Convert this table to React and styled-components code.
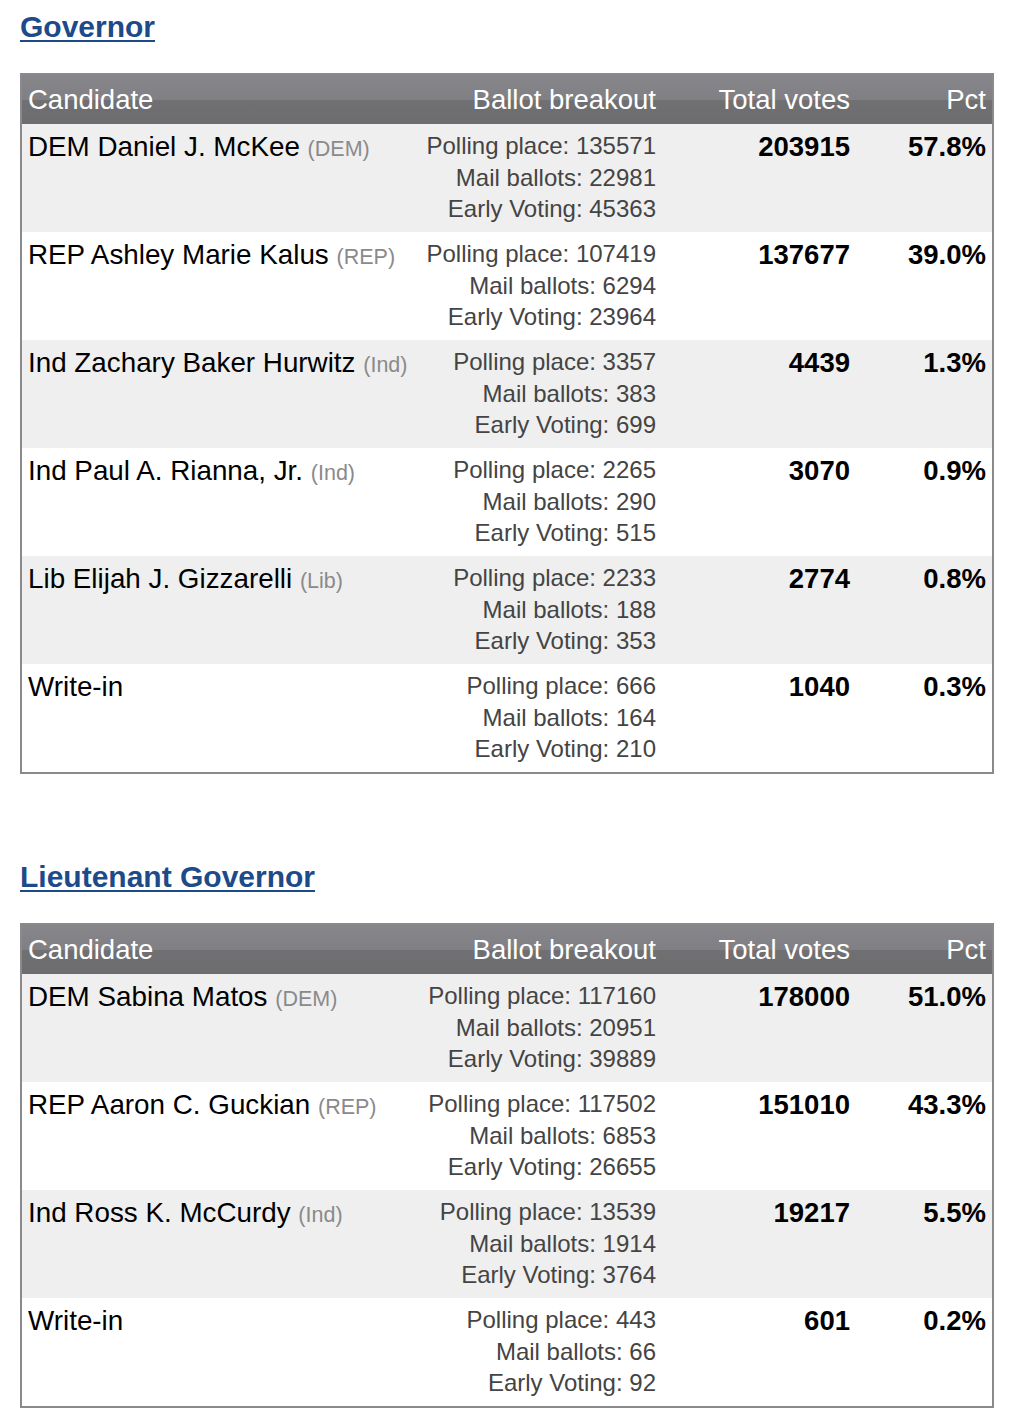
import React from "react";
import styled, { createGlobalStyle } from "styled-components";

const Global = createGlobalStyle`
  html, body { margin: 0; padding: 0; background: #fff; }
  body { font-family: "Liberation Sans", Arial, Helvetica, sans-serif; color: #000; }
`;

const Page = styled.div`
  padding: 0 20px;
`;

const Section = styled.section`
  padding-bottom: 76px;
  &:last-child { padding-bottom: 0; }
`;

const Title = styled.h2`
  margin: 9px 0 28px;
  font-size: 30px;
  line-height: 36px;
  font-weight: bold;
`;

const TitleLink = styled.a`
  color: #1d4a89;
  text-decoration: underline;
  text-decoration-thickness: 2px;
  text-underline-offset: 3px;
`;

const Table = styled.div`
  border: 2px solid #8a8a8c;
  display: grid;
  grid-template-columns: 398px 242px 194px 136px;
`;

const HeadCell = styled.div`
  padding: 9px 6px 8px;
  font-size: 27.5px;
  line-height: 32px;
  color: #fff;
  text-align: ${(p) => (p.$left ? "left" : "right")};
  background: linear-gradient(to bottom, #87878b 0%, #808084 50%, #707073 52%, #6d6d70 100%);
  white-space: nowrap;
`;

const Cell = styled.div`
  padding: 7px 6px 5px;
  min-height: 96px;
  background: ${(p) => (p.$shaded ? "#efefef" : "#fff")};
  text-align: ${(p) => (p.$left ? "left" : "right")};
  font-size: ${(p) => (p.$bold ? "27.5px" : "27.8px")};
  line-height: 32px;
  font-weight: ${(p) => (p.$bold ? "bold" : "normal")};
  white-space: nowrap;
`;

const Party = styled.span`
  font-size: 21.5px;
  color: #8a8a8a;
`;

const Breakout = styled.div`
  margin-top: -1px;
  font-size: 24px;
  line-height: 31.7px;
  color: #444;
`;

const races = [
  {
    title: "Governor",
    rows: [
      ["DEM Daniel J. McKee", "DEM", 135571, 22981, 45363, 203915, "57.8%"],
      ["REP Ashley Marie Kalus", "REP", 107419, 6294, 23964, 137677, "39.0%"],
      ["Ind Zachary Baker Hurwitz", "Ind", 3357, 383, 699, 4439, "1.3%"],
      ["Ind Paul A. Rianna, Jr.", "Ind", 2265, 290, 515, 3070, "0.9%"],
      ["Lib Elijah J. Gizzarelli", "Lib", 2233, 188, 353, 2774, "0.8%"],
      ["Write-in", null, 666, 164, 210, 1040, "0.3%"],
    ],
  },
  {
    title: "Lieutenant Governor",
    rows: [
      ["DEM Sabina Matos", "DEM", 117160, 20951, 39889, 178000, "51.0%"],
      ["REP Aaron C. Guckian", "REP", 117502, 6853, 26655, 151010, "43.3%"],
      ["Ind Ross K. McCurdy", "Ind", 13539, 1914, 3764, 19217, "5.5%"],
      ["Write-in", null, 443, 66, 92, 601, "0.2%"],
    ],
  },
];

function RaceTable({ rows }) {
  return (
    <Table>
      <HeadCell $left>Candidate</HeadCell>
      <HeadCell>Ballot breakout</HeadCell>
      <HeadCell>Total votes</HeadCell>
      <HeadCell>Pct</HeadCell>
      {rows.map(([name, party, poll, mail, early, total, pct], i) => {
        const shaded = i % 2 === 0;
        return (
          <React.Fragment key={name}>
            <Cell $left $shaded={shaded}>
              {name}
              {party && <> <Party>({party})</Party></>}
            </Cell>
            <Cell $shaded={shaded}>
              <Breakout>
                Polling place: {poll}
                <br />
                Mail ballots: {mail}
                <br />
                Early Voting: {early}
              </Breakout>
            </Cell>
            <Cell $shaded={shaded} $bold>{total}</Cell>
            <Cell $shaded={shaded} $bold>{pct}</Cell>
          </React.Fragment>
        );
      })}
    </Table>
  );
}

export default function App() {
  return (
    <>
      <Global />
      <Page>
        {races.map((r) => (
          <Section key={r.title}>
            <Title>
              <TitleLink href="#">{r.title}</TitleLink>
            </Title>
            <RaceTable rows={r.rows} />
          </Section>
        ))}
      </Page>
    </>
  );
}
